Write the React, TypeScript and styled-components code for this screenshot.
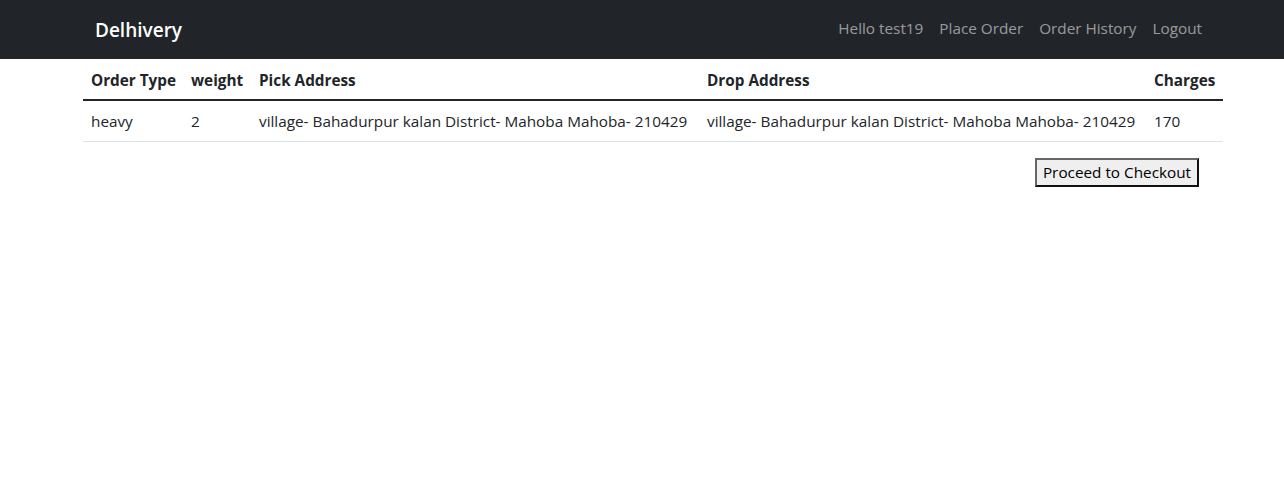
import React from "react";
import styled, { createGlobalStyle } from "styled-components";

const Global = createGlobalStyle`
  html, body { margin: 0; padding: 0; background: #fff; }
  body { font-family: "Open Sans", "Noto Sans", sans-serif; font-size: 15.3px; color: #212529; }
  * { box-sizing: border-box; }
`;

const Navbar = styled.nav`
  background: #212529;
  height: 59px;
  display: flex;
  align-items: center;
`;

const NavInner = styled.div`
  width: 1140px;
  margin-left: 83px;
  display: flex;
  align-items: center;
  justify-content: space-between;
`;

const Brand = styled.a`
  color: #fff;
  font-size: 19px;
  font-weight: 600;
  margin-left: 12px;
  margin-top: 1px;
  text-decoration: none;
`;

const NavLinks = styled.div`
  display: flex;
  gap: 16px;
  margin-right: 21px;
  margin-top: -3px;
`;

const NavLink = styled.a`
  color: rgba(255, 255, 255, 0.55);
  font-size: 15.3px;
  text-decoration: none;
`;

const Main = styled.main`
  width: 1140px;
  margin-left: 83px;
  display: flex;
  flex-direction: column;
`;

const Table = styled.table`
  width: 100%;
  border-collapse: collapse;
  table-layout: fixed;
`;

const Th = styled.th`
  text-align: left;
  font-weight: 700;
  padding: 9px 8px 7px;
  height: 41px;
  border-bottom: 2px solid #212529;
  white-space: nowrap;
`;

const Td = styled.td`
  padding: 8px;
  height: 41px;
  border-bottom: 1px solid #dee2e6;
  white-space: nowrap;
  overflow: hidden;
`;

const Actions = styled.div`
  display: flex;
  justify-content: flex-end;
  padding-right: 24px;
  margin-top: 16px;
`;

const Button = styled.button`
  font-family: "Open Sans", "Noto Sans", sans-serif;
  font-size: 15.3px;
  color: #000;
  background: #efefef;
  border: 2px solid;
  border-color: #666 #111 #111 #666;
  padding: 0;
  height: 29px;
  width: 164px;
  white-space: nowrap;
`;

const widths = [100, 68, 448, 447, 77];
const headers = ["Order Type", "weight", "Pick Address", "Drop Address", "Charges"];
const row = [
  "heavy",
  "2",
  "village- Bahadurpur kalan District- Mahoba Mahoba- 210429",
  "village- Bahadurpur kalan District- Mahoba Mahoba- 210429",
  "170",
];

export default function App() {
  return (
    <>
      <Global />
      <Navbar>
        <NavInner>
          <Brand href="#">Delhivery</Brand>
          <NavLinks>
            <NavLink href="#">Hello test19</NavLink>
            <NavLink href="#">Place Order</NavLink>
            <NavLink href="#">Order History</NavLink>
            <NavLink href="#">Logout</NavLink>
          </NavLinks>
        </NavInner>
      </Navbar>
      <Main>
        <Table>
          <colgroup>
            {widths.map((w, i) => (
              <col key={i} style={{ width: w }} />
            ))}
          </colgroup>
          <thead>
            <tr>
              {headers.map((h) => (
                <Th key={h}>{h}</Th>
              ))}
            </tr>
          </thead>
          <tbody>
            <tr>
              {row.map((c, i) => (
                <Td key={i}>{c}</Td>
              ))}
            </tr>
          </tbody>
        </Table>
        <Actions>
          <Button>Proceed to Checkout</Button>
        </Actions>
      </Main>
    </>
  );
}
